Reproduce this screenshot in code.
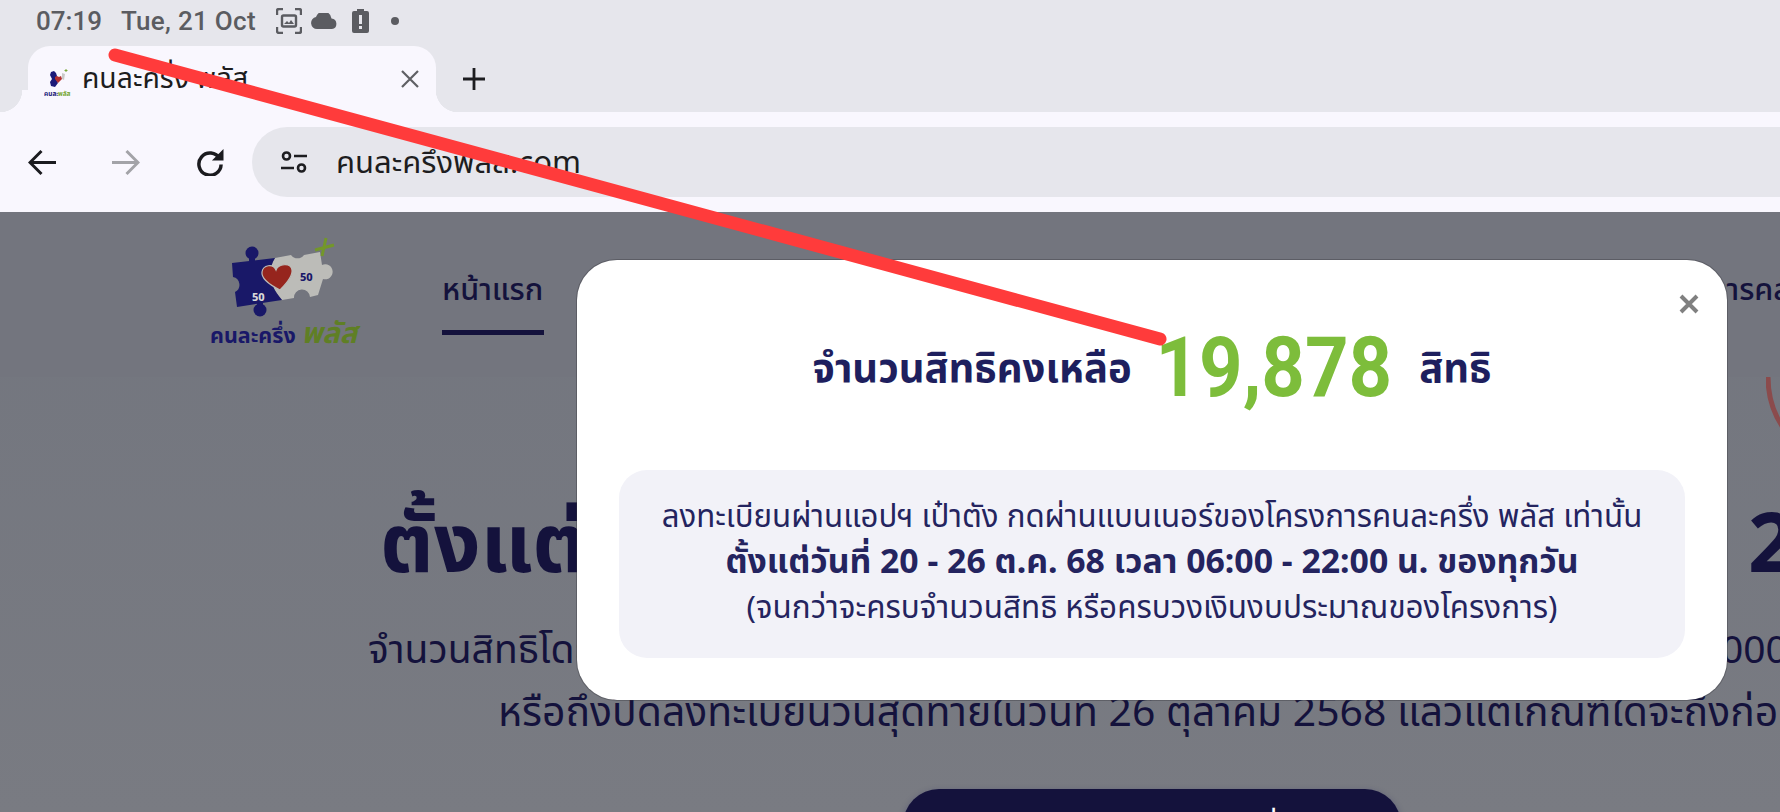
<div class="screen">
  <header class="status">
    <span class="time">07:19</span>
    <span class="date">Tue, 21 Oct</span>
    <svg class="st-shot" viewBox="0 0 26 26" fill="none" stroke="#5b5c61" stroke-width="2.4">
      <path d="M1 7V3a2 2 0 0 1 2-2h4M19 1h4a2 2 0 0 1 2 2v4M25 19v4a2 2 0 0 1-2 2h-4M7 25H3a2 2 0 0 1-2-2v-4"/>
      <rect x="6" y="7.5" width="14" height="11" rx="1.500"/>
      <path d="M8 16l3-3 2 2 2-3 3 4z" fill="#5b5c61" stroke="none"/>
    </svg>
    <svg class="st-cloud" viewBox="0 0 27 16"><path fill="#5b5c61" d="M6 16a6 6 0 0 1-1-11.900A8 8 0 0 1 20.500 5.500 5.300 5.300 0 0 1 21 16z"/></svg>
    <svg class="st-batt" viewBox="0 0 17 24"><path fill="#5b5c61" fill-rule="evenodd" d="M5 0h7v2h3a2 2 0 0 1 2 2v18a2 2 0 0 1-2 2H2a2 2 0 0 1-2-2V4a2 2 0 0 1 2-2h3zM7 6v9h3V6zm0 11v3h3v-3z"/></svg>
    <span class="st-dot"></span>
  </header>

  <div class="tabs">
    <div class="tab">
      <svg class="fav" viewBox="0 0 28 28">
        <path fill="#1c1a78" d="M7 3l3-1 2 2 1 3-1 3 2 4-3 4-4-1-1-4 2-3-2-4z"/>
        <path fill="#b33030" d="M11 8l2-1 2 1 2-1 1 3-4 4-3-4z"/>
        <path fill="#c9c9c9" d="M18 4l3 1-1 6-2-1z"/>
        <path stroke="#7aa83a" d="M22 0v3M20.500 1.500h3" fill="none"/>
        <text class="fav-a" x="0" y="27">คนละ</text>
        <text class="fav-b" x="14" y="27">พลัส</text>
      </svg>
      <span class="tab-title">คนละครึ่ง พลัส</span>
      <svg class="tab-x" viewBox="0 0 18 18"><path d="M1 1l16 16M17 1L1 17" stroke="#5f6064" stroke-width="2.200"/></svg>
    </div>
    <svg class="plus" viewBox="0 0 22 22"><path d="M11 0v22M0 11h22" stroke="#1d1d20" stroke-width="2.800"/></svg>
  </div>

  <div class="toolbar">
    <svg class="nav-ic" viewBox="0 0 28 26" fill="none" stroke="#1b1b1f" stroke-width="3"><path d="M28 13H2M13.500 1.500L2 13l11.500 11.500"/></svg>
    <svg class="nav-ic" viewBox="0 0 28 26" fill="none" stroke="#a3a3a8" stroke-width="3"><path d="M0 13h26M14.500 1.500L26 13 14.500 24.500"/></svg>
    <svg class="nav-ic" viewBox="0 0 28 28" fill="none"><path d="M24 10A11.500 11.500 0 1 0 25.500 16" stroke="#1b1b1f" stroke-width="3.600"/><path d="M28 0v12H16z" fill="#1b1b1f"/></svg>
    <div class="omni">
      <svg class="tune" viewBox="0 0 26 22" fill="none" stroke="#1d1d20" stroke-width="2.600">
        <circle cx="5.500" cy="5" r="3.500"/><path d="M13 5h13M0 17h13"/><circle cx="20.500" cy="17" r="3.500"/>
      </svg>
      <span class="url">คนละครึ่งพลัส.com</span>
    </div>
  </div>

  <main class="page">
    <nav class="site-nav">
      <div class="logo">
        <svg class="puzzle" viewBox="0 0 115 85">
          <path fill="#bcbcb8" d="M50 23L66 20A8 8 0 0 0 79 20L95 17L97 30A7.500 7.500 0 1 1 98 44L93 60L85 62A8 8 0 0 0 69 63L57 65C44 50 42 36 50 23Z"/>
          <path fill="#191868" d="M7 28L50 23C42 36 44 50 57 65L12 72L10 57A8 8 0 0 0 8 42Z"/>
          <circle cx="27" cy="18" r="6.500" fill="#191868"/>
          <rect x="24" y="22" width="6" height="6" fill="#191868"/>
          <circle cx="35" cy="75" r="6.500" fill="#191868"/>
          <rect x="32" y="68" width="6" height="6" fill="#191868"/>
          <path fill="#96251d" stroke="#bcbcb8" stroke-width="1.200" d="M55 55C45 50 36 44 37 37C38 30 48 28 51 35C53 29 66 27 67 35C68 42 60 50 55 55Z"/>
          <path d="M90 15L109 10M101 3L97 21" stroke="#73972a" stroke-width="3" fill="none"/>
          <text x="27" y="66" class="p50 wh">50</text>
          <text x="75" y="46" class="p50 nv">50</text>
        </svg>
        <div class="logo-text"><b>คนละครึ่ง</b> <i>พลัส</i></div>
      </div>
      <a class="active" href="#home">หน้าแรก</a>
      <a class="far" href="#x">การคลัง</a>
    </nav>
    <section class="hero">
      <h1><span>ตั้งแต่</span><span>2568</span></h1>
      <p class="sub one"><span>จำนวนสิทธิโดย</span><span>000</span></p>
      <p class="sub two">หรือถึงปิดลงทะเบียนวันสุดท้ายในวันที่ 26 ตุลาคม 2568 แล้วแต่เกณฑ์ใดจะถึงก่อน</p>
      <div class="cta"><span>สมัครคนละครึ่ง</span></div>
    </section>
    <svg class="arc" viewBox="0 0 20 60" fill="none"><path d="M2 0c0 20 6 38 16 52" stroke="#8b4b4c" stroke-width="5"/></svg>
  </main>

  <div class="modal">
    <button class="close" aria-label="close">
      <svg viewBox="0 0 20 20"><path d="M2 2l16 16M18 2L2 18" stroke="#808080" stroke-width="4"/></svg>
    </button>
    <div class="count">
      <span class="lab">จำนวนสิทธิคงเหลือ</span>
      <span class="num">19,878</span>
      <span class="lab">สิทธิ</span>
    </div>
    <div class="note">
      <p>ลงทะเบียนผ่านแอปฯ เป๋าตัง กดผ่านแบนเนอร์ของโครงการคนละครึ่ง พลัส เท่านั้น</p>
      <p class="strong">ตั้งแต่วันที่ 20 - 26 ต.ค. 68 เวลา 06:00 - 22:00 น. ของทุกวัน</p>
      <p class="third">(จนกว่าจะครบจำนวนสิทธิ หรือครบวงเงินงบประมาณของโครงการ)</p>
    </div>
  </div>

  <svg class="pen" viewBox="0 0 1780 812"><path d="M115 55L1160 339" stroke="#ff3b3b" stroke-width="13" stroke-linecap="round"/></svg>
</div>

<style>
  :global(body) { margin: 0; overflow: hidden; }
  .screen {
    position: relative; width: 1780px; height: 812px; overflow: hidden;
    font-family: "Noto Sans", "Noto Sans Thai", Kanit, sans-serif; background: #72757e;
  }
  .status {
    height: 46px; background: #e6e6ec; display: flex; align-items: center;
    padding: 0 0 4px 36px; color: #5b5c61; font-family: Roboto, sans-serif; font-weight: 500; font-size: 26px;
    box-sizing: border-box;
  }
  .date { margin-left: 19px; margin-right: 20px; letter-spacing: .3px; }
  .st-shot { width: 26px; height: 26px; }
  .st-cloud { width: 27px; height: 16px; margin-left: 9px; }
  .st-batt { width: 17px; height: 24px; margin-left: 14px; }
  .st-dot { width: 8px; height: 8px; border-radius: 50%; background: #5b5c61; margin-left: 22px; }

  .tabs { height: 66px; background: #e6e6ec; display: flex; align-items: center; padding-left: 28px; position: relative; }
  .tab {
    width: 408px; height: 66px; background: #f9f7fe; border-radius: 22px 22px 0 0;
    display: flex; align-items: center; padding: 0 16px; box-sizing: border-box;
    position: relative;
  }
  .tabs::before {
    content: ""; position: absolute; left: 0; bottom: 0; width: 28px; height: 22px;
    background: radial-gradient(circle at 0 0, #e6e6ec 22px, #f9f7fe 22.500px);
  }
  .tabs::after {
    content: ""; position: absolute; left: 436px; bottom: 0; width: 22px; height: 22px;
    background: radial-gradient(circle at 100% 0, #e6e6ec 22px, #f9f7fe 22.500px);
  }
  .fav { width: 28px; height: 28px; margin-top: 8px; flex: none; }
  .fav-a { font-size: 6.500px; font-weight: 700; fill: #1c1a78; }
  .fav-b { font-size: 6.500px; font-weight: 700; fill: #7aa83a; }
  .tab-title { margin-left: 10px; font-size: 28.300px; color: #1d1d20; flex: 1; white-space: nowrap; }
  .tab-x { width: 18px; height: 18px; margin-right: 1px; }
  .plus { width: 22px; height: 22px; margin-left: 27px; }

  .toolbar { height: 100px; background: #f9f7fe; display: flex; align-items: center; padding-left: 28px; box-sizing: border-box; }
  .nav-ic { width: 28px; height: 27px; margin-right: 56px; flex: none; }
  .nav-ic:nth-child(3) { margin-right: 28px; }
  .omni {
    flex: 1; height: 70px; background: #e6e6ec; border-radius: 35px 0 0 35px;
    display: flex; align-items: center; padding-left: 29px;
  }
  .tune { width: 26px; height: 22px; }
  .url { margin: 3px 0 0 29px; font-size: 31px; color: #1d1d20; }

  .page { height: 600px; position: relative; background: linear-gradient(#72757e, #797b82); }
  .site-nav { height: 165px; background: #73757e; display: flex; align-items: flex-start; position: relative; }
  .logo { margin-left: 210px; margin-top: 23px; width: 150px; }
  .puzzle { width: 115px; height: 85px; display: block; margin-left: 15px; }
  .p50 { font: 800 11px "Noto Sans", sans-serif; }
  .wh { fill: #d8d8d8; } .nv { fill: #191868; }
  .logo-text { font-size: 21.500px; line-height: 24px; color: #191868; white-space: nowrap; }
  .logo-text i { color: #5f7f25; font-size: 29px; font-weight: 700; }
  .site-nav a { color: #14123c; text-decoration: none; font-size: 30.500px; font-weight: 500; }
  .active {
    margin-left: 82px; margin-top: 55px; height: 68px; box-sizing: border-box; width: 102px;
    border-bottom: 5px solid #14123c; white-space: nowrap;
  }
  .far { position: absolute; left: 1708px; top: 55px; white-space: nowrap; }

  .hero { color: #14123c; }
  h1 {
    margin: 113px 0 0; padding-left: 380px; height: 100px; font-size: 82px; font-weight: 700; line-height: 100px;
    display: grid; grid-template-columns: 1368px auto; white-space: nowrap;
  }
  .sub { margin: 0; font-size: 39px; line-height: 63px; white-space: nowrap; font-weight: 400; }
  .one { margin-top: 26px; padding-left: 368px; display: grid; grid-template-columns: 1353px auto; }
  .two { padding-left: 498px; font-size: 40.900px; }
  .cta {
    margin: 47px 0 0 903px; width: 498px; height: 80px; background: #14123c; border-radius: 36px; color: #fff;
    text-align: center; font-size: 30px; padding: 17px 0 0 100px; box-sizing: border-box;
    box-shadow: 0 2px 6px rgba(40,40,100,.4); white-space: nowrap;
  }

  .arc { position: absolute; right: -6px; top: 165px; width: 20px; height: 60px; }

  .modal {
    position: absolute; left: 577px; top: 260px; width: 1150px; height: 440px;
    background: #fff; border-radius: 40px; box-sizing: border-box; padding: 0 42px;
    box-shadow: 0 0 0 1px rgba(50,50,55,.35);
  }
  .close { position: absolute; right: 28px; top: 34px; padding: 0; border: 0; background: none; width: 20px; height: 20px; }
  .close svg { display: block; width: 20px; height: 20px; }
  .count { display: flex; align-items: center; justify-content: center; height: 210px; padding-top: 8px; box-sizing: border-box; color: #1e1f5e; }
  .lab { font-size: 40px; font-weight: 700; }
  .num {
    font-size: 84px; font-weight: 700; color: #7dbd3b; margin: 0 13px; font-family: Roboto, sans-serif;
    display: inline-block; transform: translate(-2px, -2px) scaleX(.905);
  }
  .note {
    background: #f2f2f8; border-radius: 28px; height: 188px; box-sizing: border-box; padding-top: 23px;
    text-align: center; color: #24245f;
  }
  .note p { margin: 0; font-size: 31.200px; line-height: 45px; white-space: nowrap; }
  .note .strong { font-weight: 700; font-size: 33.800px; }
  .note .third { font-size: 31.400px; }

  .pen { position: absolute; inset: 0; width: 1780px; height: 812px; pointer-events: none; }
</style>
